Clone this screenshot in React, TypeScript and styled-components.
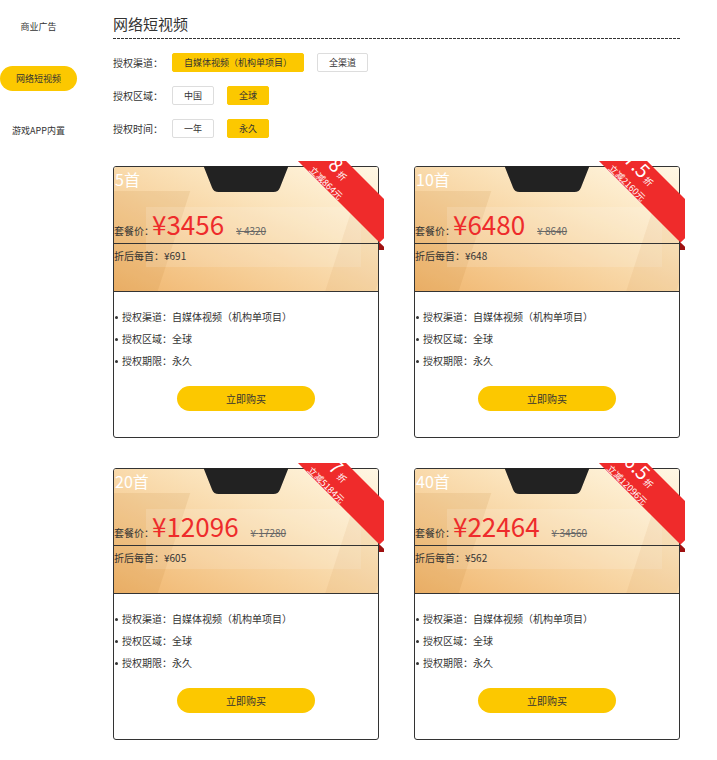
import React from "react";
import styled, { createGlobalStyle } from "styled-components";

const GlobalStyle = createGlobalStyle`
  html, body {
    margin: 0;
    padding: 0;
    background: #fff;
  }
  body {
    font-family: "Noto Sans CJK SC", "Noto Sans", sans-serif;
    color: #333;
  }
  * {
    box-sizing: border-box;
  }
`;

const navItems = ["商业广告", "网络短视频", "游戏APP内置"];

const filters = [
  { label: "授权渠道：", options: ["自媒体视频（机构单项目）", "全渠道"], active: 0 },
  { label: "授权区域：", options: ["中国", "全球"], active: 1 },
  { label: "授权时间：", options: ["一年", "永久"], active: 1 },
];

const packages = [
  { count: 5, price: 3456, original: 4320, per: 691, discount: "8", save: 864 },
  { count: 10, price: 6480, original: 8640, per: 648, discount: "7.5", save: 2160 },
  { count: 20, price: 12096, original: 17280, per: 605, discount: "7", save: 5184 },
  { count: 40, price: 22464, original: 34560, per: 562, discount: "6.5", save: 12096 },
];

const App = () => {
  return (
    <>
      <GlobalStyle />
      <Page>
        <Sidebar>
          {navItems.map((item) => (
            <NavItem key={item} $active={item === "网络短视频"}>
              {item}
            </NavItem>
          ))}
        </Sidebar>
        <Main>
          <Title>网络短视频</Title>
          <Filters>
            {filters.map((f) => (
              <FilterRow key={f.label}>
                <FilterLabel>{f.label}</FilterLabel>
                <OptionGroup>
                  {f.options.map((opt, i) => (
                    <Option key={opt} $active={i === f.active}>
                      {opt}
                    </Option>
                  ))}
                </OptionGroup>
              </FilterRow>
            ))}
          </Filters>
          <CardGrid>
            {packages.map((p) => (
              <Card key={p.count}>
                <CardHead>
                  <DecoLeft />
                  <DecoBand />
                  <DecoRight />
                  <Count>{p.count}首</Count>
                  <PriceRow>
                    <PriceLabel>套餐价：</PriceLabel>
                    <Price>¥{p.price}</Price>
                    <OldPrice>¥ {p.original}</OldPrice>
                  </PriceRow>
                  <PerRow>折后每首：¥{p.per}</PerRow>
                </CardHead>
                <Notch width="85" height="26" viewBox="0 0 85 26">
                  <path d="M0 0 H85 L76.5 21.5 Q74.8 26 70 26 H15 Q10.2 26 8.5 21.5 Z" fill="#222" />
                </Notch>
                <Ribbon>
                  <Band>
                    <BandTop>
                      <Big>{p.discount}</Big> 折
                    </BandTop>
                    <BandBottom>立减{p.save}元</BandBottom>
                  </Band>
                </Ribbon>
                <Fold />
                <CardBody>
                  <Features>
                    <li>授权渠道：自媒体视频（机构单项目）</li>
                    <li>授权区域：全球</li>
                    <li>授权期限：永久</li>
                  </Features>
                  <BuyButton>立即购买</BuyButton>
                </CardBody>
              </Card>
            ))}
          </CardGrid>
        </Main>
      </Page>
    </>
  );
};

const Page = styled.div`
  display: flex;
  width: 717px;
  min-height: 760px;
`;

const Sidebar = styled.nav`
  width: 77px;
  flex-shrink: 0;
  padding-top: 14px;
  display: flex;
  flex-direction: column;
  gap: 27px;
`;

const NavItem = styled.div<{ $active?: boolean }>`
  height: 25px;
  line-height: 25px;
  text-align: center;
  font-size: 9px;
  color: #333;
  border-radius: 13px;
  background: ${({ $active }) => ($active ? "#fcc800" : "transparent")};
`;

const Main = styled.main`
  margin-left: 36px;
  width: 567px;
  padding-top: 14px;
`;

// 标题下方的细虚线
const Title = styled.h1`
  margin: 0;
  font-size: 15px;
  font-weight: normal;
  line-height: 20px;
  padding-bottom: 5px;
  color: #333;
  background: repeating-linear-gradient(to right, #333 0 3px, transparent 3px 4px) left bottom / 100% 1px
    no-repeat;
`;

const Filters = styled.div`
  margin-top: 14px;
  display: flex;
  flex-direction: column;
  gap: 14px;
`;

const FilterRow = styled.div`
  display: flex;
  align-items: center;
  height: 19px;
`;

const FilterLabel = styled.span`
  width: 59px;
  flex-shrink: 0;
  font-size: 10px;
  line-height: 19px;
  white-space: nowrap;
`;

const OptionGroup = styled.div`
  display: flex;
  gap: 13px;
`;

const Option = styled.span<{ $active?: boolean }>`
  height: 19px;
  line-height: 17px;
  padding: 0 11px;
  font-size: 9px;
  color: #333;
  white-space: nowrap;
  border-radius: 2px;
  border: 1px solid ${({ $active }) => ($active ? "#fcc800" : "#ddd")};
  background: ${({ $active }) => ($active ? "#fcc800" : "#fff")};
`;

const CardGrid = styled.div`
  margin-top: 28px;
  display: grid;
  grid-template-columns: 266px 266px;
  column-gap: 35px;
  row-gap: 30px;
`;

const Card = styled.div`
  position: relative;
  height: 272px;
  border: 1px solid #333;
  border-radius: 3px;
  background: #fff;
`;

const CardHead = styled.div`
  position: relative;
  height: 125px;
  overflow: hidden;
  border-bottom: 1px solid #333;
  border-radius: 2px 2px 0 0;
  background: linear-gradient(205deg, #fff7e4 0%, #fbe4bd 35%, #f6cd95 68%, #f0b56d 100%);
`;

const DecoLeft = styled.div`
  position: absolute;
  left: -30px;
  top: 24px;
  width: 90px;
  height: 100px;
  transform: skewX(-18deg);
  background: rgba(190, 120, 40, 0.12);
`;

const DecoBand = styled.div`
  position: absolute;
  left: 32px;
  top: 40px;
  width: 215px;
  height: 60px;
  background: rgba(255, 255, 255, 0.14);
`;

const DecoRight = styled.div`
  position: absolute;
  right: -10px;
  top: 40px;
  width: 50px;
  height: 90px;
  transform: skewX(-18deg);
  background: rgba(190, 120, 40, 0.08);
`;

const Count = styled.div`
  position: relative;
  height: 24px;
  padding-left: 1px;
  font-size: 16px;
  line-height: 24px;
  color: #fff;
`;

const PriceRow = styled.div`
  position: relative;
  height: 53px;
  padding-top: 18px;
  display: flex;
  align-items: baseline;
  border-bottom: 1px solid #333;
`;

const PriceLabel = styled.span`
  font-size: 10px;
  color: #333;
`;

const Price = styled.span`
  margin-left: -2px;
  font-size: 26px;
  line-height: 30px;
  color: #ee2b2b;
`;

const OldPrice = styled.span`
  margin-left: 12px;
  font-size: 10px;
  color: #666;
  text-decoration: line-through;
`;

const PerRow = styled.div`
  position: relative;
  padding-top: 5px;
  font-size: 10px;
  line-height: 14px;
  color: #333;
`;

const Notch = styled.svg`
  position: absolute;
  top: -1px;
  left: 50%;
  transform: translateX(-50%);
  display: block;
`;

// 右上角的折扣斜带
const Ribbon = styled.div`
  position: absolute;
  top: -6px;
  right: -6px;
  width: 90px;
  height: 90px;
  overflow: hidden;
  pointer-events: none;
`;

const Band = styled.div`
  position: absolute;
  left: -39px;
  top: -4px;
  width: 160px;
  height: 34px;
  transform: rotate(45deg);
  background: #ef2b2b;
  color: #fff;
  display: flex;
  flex-direction: column;
  align-items: center;
  justify-content: center;
`;

const BandTop = styled.div`
  font-size: 9px;
  line-height: 21px;
  white-space: nowrap;
`;

const Big = styled.span`
  font-size: 19px;
`;

const BandBottom = styled.div`
  font-size: 9px;
  line-height: 12px;
  white-space: nowrap;
`;

const Fold = styled.div`
  position: absolute;
  right: -6px;
  top: 75px;
  width: 5px;
  height: 8px;
  background: #9e1010;
  clip-path: polygon(0 0, 100% 60%, 100% 100%, 0 100%);
`;

const CardBody = styled.div`
  padding-top: 14px;
  display: flex;
  flex-direction: column;
  align-items: center;
`;

const Features = styled.ul`
  align-self: stretch;
  margin: 0;
  padding: 0 0 0 1px;
  list-style: none;

  li {
    display: flex;
    align-items: center;
    font-size: 10px;
    line-height: 22px;
    color: #333;
  }

  li::before {
    content: "";
    width: 3px;
    height: 3px;
    margin-right: 4px;
    border-radius: 50%;
    background: #333;
  }
`;

const BuyButton = styled.button`
  margin-top: 14px;
  width: 138px;
  height: 25px;
  border: none;
  border-radius: 13px;
  background: #fcc800;
  font-family: inherit;
  font-size: 10px;
  color: #333;
  cursor: pointer;
`;

export default App;
